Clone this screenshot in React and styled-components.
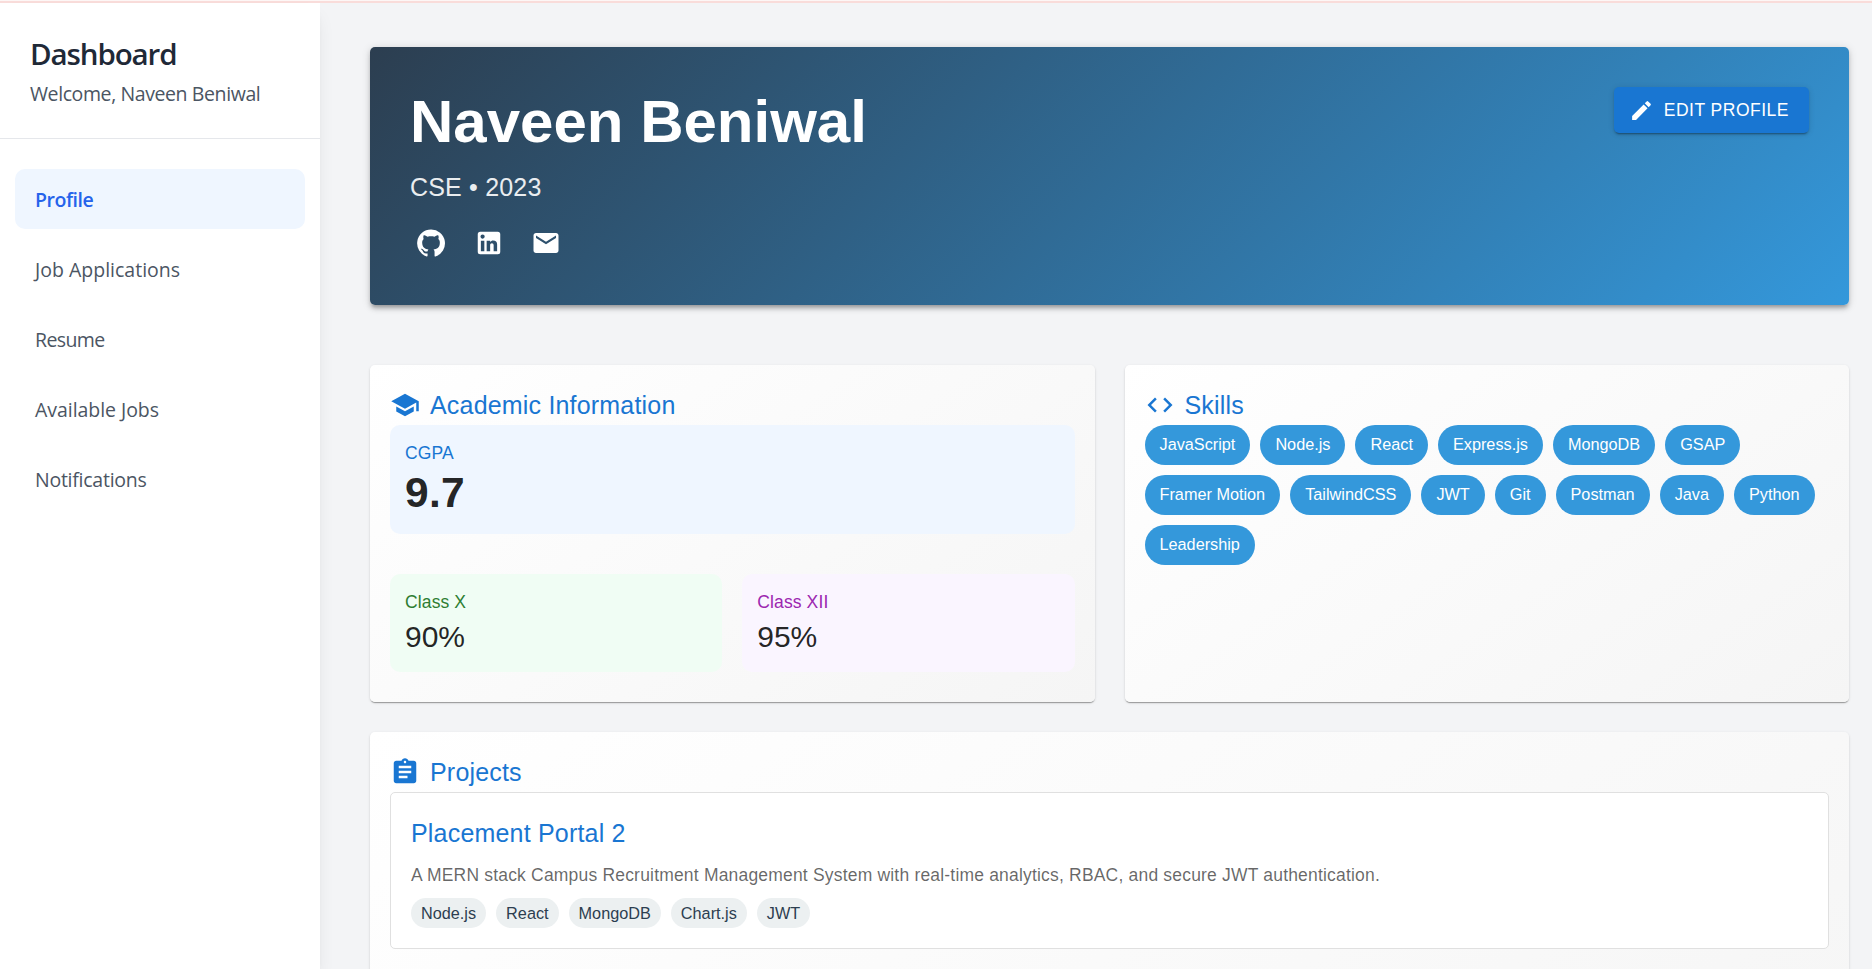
import React from "react";
import styled, { createGlobalStyle } from "styled-components";
import { MdSchool, MdCode, MdAssignment, MdEmail, MdEdit } from "react-icons/md";

const GlobalStyle = createGlobalStyle`
  *, *::before, *::after { box-sizing: border-box; }
  html, body { margin: 0; padding: 0; height: 100%; overflow: hidden; }
  #root { height: 100vh; }
  h1, h2, h3, p, ul { margin: 0; padding: 0; font-weight: 400; }
  svg { display: block; flex-shrink: 0; }
`;

const Page = styled.div`
  height: 100vh;
  display: flex;
  flex-direction: column;
  overflow: hidden;
  background: #f3f4f6;
  font-family: "Liberation Sans", Arial, sans-serif;
  color: rgba(0, 0, 0, 0.87);
`;

const TopLine = styled.div`
  height: 3px;
  flex-shrink: 0;
  background: #f9dcda;
  border-top: 1px solid #fdf6f5;
`;

const Body = styled.div`
  flex: 1;
  min-height: 0;
  display: flex;
`;

const Sidebar = styled.aside`
  width: 320px;
  flex-shrink: 0;
  background: #fff;
  font-family: "Open Sans", "Noto Sans", sans-serif;
  box-shadow: 0 12.5px 18.75px -3.75px rgba(0, 0, 0, 0.1), 0 5px 7.5px -5px rgba(0, 0, 0, 0.1);
`;

const SidebarHeader = styled.header`
  height: 136px;
  padding: 30px 30px 0;
  border-bottom: 1px solid #e5e7eb;
`;

const SidebarTitle = styled.h1`
  font-size: 29.5px;
  line-height: 42px;
  font-weight: 600;
  letter-spacing: -1.1px;
  color: #1f2937;
  white-space: nowrap;
`;

const Welcome = styled.p`
  font-size: 19.5px;
  line-height: 30px;
  margin-top: 4px;
  letter-spacing: -0.4px;
  color: #4b5563;
  white-space: nowrap;
`;

const Nav = styled.nav`
  padding: 30px 15px;
  display: flex;
  flex-direction: column;
  gap: 10px;
`;

const NavItem = styled.a`
  height: 60px;
  padding: 16px 20px 14px;
  border-radius: 10px;
  font-size: 19.5px;
  line-height: 30px;
  letter-spacing: ${(p) => p.$spacing};
  font-weight: ${(p) => (p.$active ? 600 : 400)};
  color: ${(p) => (p.$active ? "#2563eb" : "#4b5563")};
  background: ${(p) => (p.$active ? "#eff6ff" : "transparent")};
  white-space: nowrap;
`;

const Main = styled.main`
  flex: 1;
  min-width: 0;
  padding: 44px 23px 0 50px;
  display: flex;
  flex-direction: column;
`;

const Banner = styled.section`
  height: 258px;
  flex-shrink: 0;
  padding: 40px;
  display: flex;
  justify-content: space-between;
  align-items: flex-start;
  border-radius: 5px;
  color: #fff;
  background: linear-gradient(135deg, #2c3e50 0%, #3498db 100%);
  box-shadow: 0 3.75px 3.75px -2.5px rgba(0, 0, 0, 0.2), 0 3.75px 5px 0 rgba(0, 0, 0, 0.14),
    0 1.25px 10px 0 rgba(0, 0, 0, 0.12);
`;

const Name = styled.h2`
  font-size: 60px;
  line-height: 70px;
  font-weight: 700;
`;

const Branch = styled.p`
  margin-top: 10px;
  font-size: 25px;
  line-height: 40px;
  letter-spacing: 0.0075em;
  opacity: 0.9;
`;

const Socials = styled.div`
  margin-top: 15px;
  display: flex;
  gap: 15px;
`;

const IconButton = styled.a`
  padding: 6.25px;
  color: #fff;
`;

const EditButton = styled.button`
  height: 46px;
  padding: 0 20px 0 15px;
  display: flex;
  align-items: center;
  gap: 10px;
  border: 0;
  border-radius: 5px;
  font: 500 17.5px/30px "Liberation Sans", Arial, sans-serif;
  letter-spacing: 0.02857em;
  text-transform: uppercase;
  color: #fff;
  background: #1976d2;
  box-shadow: 0 3px 1px -2px rgba(0, 0, 0, 0.2), 0 2px 2px 0 rgba(0, 0, 0, 0.14),
    0 1px 6px 0 rgba(0, 0, 0, 0.12);
`;

const Columns = styled.div`
  margin-top: 60px;
  display: grid;
  grid-template-columns: 1fr 1fr;
  gap: 30px;
  height: 337px;
  flex-shrink: 0;
`;

const Card = styled.section`
  padding: 20px;
  border-radius: 5px;
  background: linear-gradient(145deg, #ffffff 0%, #f5f5f5 100%);
  box-shadow: 0 2px 1px -1px rgba(0, 0, 0, 0.2), 0 1px 1px 0 rgba(0, 0, 0, 0.14),
    0 1px 3px 0 rgba(0, 0, 0, 0.12);
`;

const ProjectsCard = styled(Card)`
  margin-top: 30px;
  height: 440px;
  flex-shrink: 0;
`;

const CardTitle = styled.h3`
  display: flex;
  align-items: center;
  gap: 10px;
  font-size: 25px;
  line-height: 40px;
  letter-spacing: 0.0075em;
  color: #1976d2;
`;

const Scores = styled.div`
  display: grid;
  grid-template-columns: 1fr 1fr;
  column-gap: 20px;
  row-gap: 40px;
`;

const Score = styled.div`
  grid-column: ${(p) => (p.$wide ? "1 / -1" : "auto")};
  padding: 15px;
  border-radius: 10px;
  background: ${(p) => p.$bg};
`;

const ScoreLabel = styled.p`
  font-size: 17.5px;
  line-height: 27px;
  letter-spacing: 0.00714em;
  color: ${(p) => p.$color};
`;

const ScoreValue = styled.p`
  font-size: ${(p) => (p.$big ? "42.5px" : "30px")};
  line-height: ${(p) => (p.$big ? "52px" : "41px")};
  letter-spacing: ${(p) => (p.$big ? "0.00735em" : "0")};
  font-weight: ${(p) => (p.$big ? 700 : 400)};
`;

const Chips = styled.div`
  margin-top: ${(p) => p.$top || "0"};
  display: flex;
  flex-wrap: wrap;
  gap: 10px;
`;

const SkillChip = styled.span`
  height: 40px;
  padding: 0 15px;
  border-radius: 20px;
  font-size: 16.25px;
  line-height: 39px;
  color: #fff;
  background: #3498db;
`;

const TechChip = styled.span`
  height: 30px;
  padding: 0 10px;
  border-radius: 15px;
  font-size: 16.25px;
  line-height: 30px;
  color: #2c3e50;
  background: #ecf0f1;
`;

const Project = styled.article`
  padding: 20px;
  border: 1px solid #e0e0e0;
  border-radius: 5px;
  background: #fff;
`;

const ProjectTitle = styled.h3`
  font-size: 25px;
  line-height: 40px;
  letter-spacing: 0.0075em;
  color: #1976d2;
`;

const ProjectText = styled.p`
  margin-top: 10px;
  font-size: 17.5px;
  line-height: 25px;
  letter-spacing: 0.01071em;
  color: rgba(0, 0, 0, 0.6);
`;

const GitHubIcon = () => (
  <svg width="30" height="30" viewBox="0 0 24 24" fill="currentColor">
    <path d="M12 1.27a11 11 0 00-3.48 21.46c.55.09.73-.28.73-.55v-1.84c-3.03.64-3.67-1.46-3.67-1.46-.55-1.29-1.28-1.65-1.28-1.65-.92-.65.1-.65.1-.65 1.1 0 1.73 1.1 1.73 1.1.92 1.65 2.57 1.2 3.21.92a2 2 0 01.64-1.47c-2.47-.27-5.04-1.19-5.04-5.5 0-1.1.46-2.1 1.2-2.84a3.76 3.76 0 010-2.93s.91-.28 3.11 1.1c1.8-.49 3.7-.49 5.5 0 2.1-1.38 3.02-1.1 3.02-1.1a3.76 3.76 0 01.1 2.93c.83.74 1.2 1.74 1.2 2.94 0 4.21-2.57 5.13-5.04 5.4.45.37.82.92.82 2.02v3.03c0 .27.1.64.73.55A11 11 0 0012 1.27" />
  </svg>
);

const LinkedInIcon = () => (
  <svg width="30" height="30" viewBox="0 0 24 24" fill="currentColor">
    <path d="M19 3a2 2 0 0 1 2 2v14a2 2 0 0 1-2 2H5a2 2 0 0 1-2-2V5a2 2 0 0 1 2-2h14m-.5 15.5v-5.3a3.26 3.26 0 0 0-3.26-3.26c-.85 0-1.84.52-2.32 1.3v-1.11h-2.79v8.37h2.79v-4.93c0-.77.62-1.4 1.39-1.4a1.4 1.4 0 0 1 1.4 1.4v4.93h2.79M6.88 8.56a1.68 1.68 0 0 0 1.68-1.68c0-.93-.75-1.69-1.68-1.69a1.69 1.69 0 0 0-1.69 1.69c0 .93.76 1.68 1.69 1.68m1.39 9.94v-8.37H5.5v8.37h2.77z" />
  </svg>
);

const navItems = [
  { label: "Profile", active: true, spacing: "-0.45px" },
  { label: "Job Applications", spacing: "0" },
  { label: "Resume", spacing: "-0.6px" },
  { label: "Available Jobs", spacing: "-0.05px" },
  { label: "Notifications", spacing: "-0.25px" },
];

const skills = [
  "JavaScript", "Node.js", "React", "Express.js", "MongoDB", "GSAP",
  "Framer Motion", "TailwindCSS", "JWT", "Git", "Postman", "Java", "Python",
  "Leadership",
];

const projectTech = ["Node.js", "React", "MongoDB", "Chart.js", "JWT"];

export default function App() {
  return (
    <Page>
      <GlobalStyle />
      <TopLine />
      <Body>
        <Sidebar>
          <SidebarHeader>
            <SidebarTitle>Dashboard</SidebarTitle>
            <Welcome>Welcome, Naveen Beniwal</Welcome>
          </SidebarHeader>
          <Nav>
            {navItems.map((item) => (
              <NavItem key={item.label} $active={item.active} $spacing={item.spacing}>
                {item.label}
              </NavItem>
            ))}
          </Nav>
        </Sidebar>
        <Main>
          <Banner>
            <div>
              <Name>Naveen Beniwal</Name>
              <Branch>CSE • 2023</Branch>
              <Socials>
                <IconButton><GitHubIcon /></IconButton>
                <IconButton><LinkedInIcon /></IconButton>
                <IconButton><MdEmail size={30} /></IconButton>
              </Socials>
            </div>
            <EditButton><MdEdit size={25} />Edit Profile</EditButton>
          </Banner>
          <Columns>
            <Card>
              <CardTitle><MdSchool size={30} />Academic Information</CardTitle>
              <Scores>
                <Score $wide $bg="#eff6ff">
                  <ScoreLabel $color="#1976d2">CGPA</ScoreLabel>
                  <ScoreValue $big>9.7</ScoreValue>
                </Score>
                <Score $bg="#f0fdf4">
                  <ScoreLabel $color="#2e7d32">Class X</ScoreLabel>
                  <ScoreValue>90%</ScoreValue>
                </Score>
                <Score $bg="#faf5ff">
                  <ScoreLabel $color="#9c27b0">Class XII</ScoreLabel>
                  <ScoreValue>95%</ScoreValue>
                </Score>
              </Scores>
            </Card>
            <Card>
              <CardTitle><MdCode size={30} />Skills</CardTitle>
              <Chips>
                {skills.map((skill) => <SkillChip key={skill}>{skill}</SkillChip>)}
              </Chips>
            </Card>
          </Columns>
          <ProjectsCard>
            <CardTitle><MdAssignment size={30} />Projects</CardTitle>
            <Project>
              <ProjectTitle>Placement Portal 2</ProjectTitle>
              <ProjectText>
                A MERN stack Campus Recruitment Management System with real-time analytics, RBAC, and secure JWT authentication.
              </ProjectText>
              <Chips $top="10px">
                {projectTech.map((tech) => <TechChip key={tech}>{tech}</TechChip>)}
              </Chips>
            </Project>
          </ProjectsCard>
        </Main>
      </Body>
    </Page>
  );
}
